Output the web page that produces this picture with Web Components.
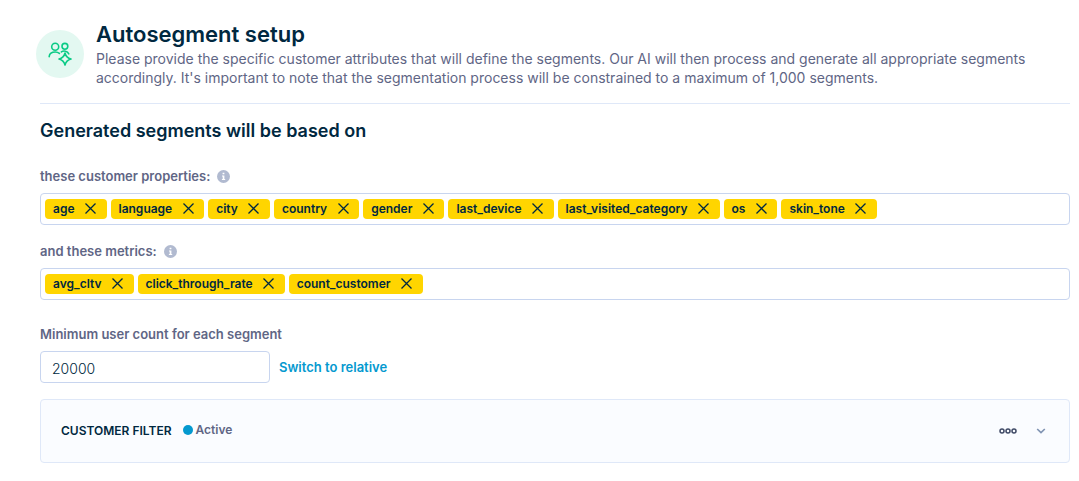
<!DOCTYPE html>
<html lang="en">
<head>
<meta charset="utf-8">
<title>Autosegment setup</title>
<style>
  body { margin: 0; background: #fff; color: #002840; font-family: Inter, "Liberation Sans", sans-serif; font-size: 13px; line-height: 20px; }
</style>
</head>
<body>
<autosegment-page></autosegment-page>

<script>
const define = (name, html, setup) => {
  const template = document.createElement('template');
  template.innerHTML = html;
  customElements.define(name, class extends HTMLElement {
    constructor() {
      super();
      this.attachShadow({ mode: 'open' }).append(template.content.cloneNode(true));
    }
    connectedCallback() { if (setup) setup(this, this.shadowRoot); }
  });
};

define('page-header', `
  <style>
    :host { display: flex; gap: 12px; align-items: flex-start; margin-left: -4px; padding-bottom: 16px; }
    .badge { flex: none; width: 48px; height: 48px; margin-top: 8px; border-radius: 50%; background: #e3f8f1; display: grid; place-items: center; }
    h1 { margin: 0; font-size: 22px; line-height: 24px; font-weight: 600; color: #002840; }
    p { margin: 3px 0 0; font-size: 14px; line-height: 19px; color: #5f6685; }
  </style>
  <span class="badge">
    <svg width="24" height="24" viewBox="0 0 24 24" fill="none" stroke="#0bcb86" stroke-width="1.6" stroke-linejoin="round" stroke-linecap="round" aria-hidden="true">
      <circle cx="7.2" cy="4.7" r="3.5"/>
      <circle cx="16.9" cy="4.3" r="2.9"/>
      <path d="M1.2 14.8v-.5C1.6 11.2 4.2 10 7.2 10c1.7 0 3.1.5 4.2 1.4"/>
      <path d="M13.4 9.9c2.2-1.7 6-.9 7.4 1.9"/>
      <path d="M17 11c.9 3.7 2.3 5.1 6 6-3.7.9-5.1 2.3-6 6-.9-3.7-2.3-5.1-6-6 3.7-.9 5.1-2.3 6-6z"/>
    </svg>
  </span>
  <div>
    <h1><slot name="title"></slot></h1>
    <p><slot></slot></p>
  </div>`);

define('info-tip', `
  <style>
    :host { display: block; width: 13px; height: 13px; }
    svg { display: block; }
  </style>
  <svg width="13" height="13" viewBox="0 0 13 13" role="img" aria-label="Information">
    <circle cx="6.5" cy="6.5" r="6.5" fill="#b1bad0"/>
    <path d="M5.6 2.7h1.8v1.6H5.6zM5 5.4h2.4v3.5h.8v1H4.9v-1h.8V6.4H5z" fill="#fff"/>
  </svg>`);

define('tag-chip', `
  <style>
    :host { display: flex; align-items: center; height: 20px; padding-left: 8px; border-radius: 4px; background: #ffd500; color: #002840; font-size: 12px; font-weight: 600; line-height: 20px; }
    button { width: 32px; height: 20px; padding: 0; border: 0; background: none; color: inherit; display: grid; place-items: center; cursor: pointer; }
    svg { display: block; margin-bottom: 2px; }
  </style>
  <slot></slot>
  <button type="button">
    <svg width="11" height="11" viewBox="0 0 11 11" fill="none" stroke="currentColor" stroke-width="1.3" aria-hidden="true"><path d="M.5.5l10 10M10.5.5l-10 10"/></svg>
  </button>`, (host, root) => {
  root.querySelector('button').setAttribute('aria-label', 'Remove ' + host.textContent);
  root.querySelector('button').onclick = () => host.remove();
});

define('tag-field', `
  <style>
    :host { display: block; }
    .label { display: flex; align-items: center; gap: 7px; height: 20px; color: #5f6685; font-weight: 600; }
    .box { display: flex; flex-wrap: wrap; gap: 4px; margin-top: 7px; padding: 5px 4px; border: 1px solid #c8d5ef; border-radius: 4px; }
  </style>
  <div class="label"><span id="label"><slot name="label"></slot></span><info-tip></info-tip></div>
  <div class="box" role="group" aria-labelledby="label"><slot></slot></div>`);

define('count-field', `
  <style>
    :host { display: block; }
    label { display: block; color: #5f6685; font-weight: 600; }
    .row { display: flex; align-items: center; gap: 9px; margin-top: 7px; }
    input { box-sizing: border-box; width: 230px; height: 32px; padding: 2px 11px 0; border: 1px solid #c8d5ef; border-radius: 4px; background: #fff; color: #002840; font: 300 14px Inter, "Liberation Sans", sans-serif; }
    a { color: #0499cf; font-weight: 600; text-decoration: none; }
  </style>
  <label for="count">Minimum user count for each segment</label>
  <div class="row">
    <input id="count" type="text" inputmode="numeric" value="20000">
    <a href="#relative">Switch to relative</a>
  </div>`);

define('filter-panel', `
  <style>
    :host { display: flex; align-items: center; box-sizing: border-box; height: 64px; padding: 0 20px; border: 1px solid #dfe8f8; border-radius: 4px; background: #fafcff; }
    h3 { margin: 0; font-size: 12px; line-height: 20px; font-weight: 600; color: #002840; }
    .status { display: flex; align-items: center; gap: 3px; margin: 0 auto 0 11px; padding-bottom: 2px; font-size: 12px; font-weight: 600; color: #5f6685; }
    .status::before { content: ""; width: 10px; height: 10px; border-radius: 50%; background: #0499cf; }
    button { padding: 0; border: 0; background: none; display: grid; place-items: center; height: 24px; cursor: pointer; }
    .more { width: 24px; margin-right: 13px; }
    .toggle { width: 16px; }
  </style>
  <h3><slot></slot></h3>
  <span class="status">Active</span>
  <button class="more" type="button" aria-label="More actions">
    <svg width="18" height="6" viewBox="0 0 18 6" fill="none" stroke="#3f4a66" stroke-width="1.5" aria-hidden="true"><circle cx="3" cy="3" r="2"/><circle cx="9" cy="3" r="2"/><circle cx="15" cy="3" r="2"/></svg>
  </button>
  <button class="toggle" type="button" aria-label="Expand" aria-expanded="false">
    <svg width="10" height="6" viewBox="0 0 10 6" fill="none" stroke="#8094b3" stroke-width="1.7" aria-hidden="true"><path d="M1.2 1L5 4.6 8.8 1"/></svg>
  </button>`);

define('autosegment-page', `
  <style>
    :host { display: block; padding: 22px 9px 18px 40px; }
    main { display: flex; flex-direction: column; }
    h2 { margin: 0; padding-top: 15px; border-top: 1px solid #dfe8f8; font-size: 18px; line-height: 24px; font-weight: 600; color: #002840; }
    .first { margin-top: 23px; }
    .second { margin-top: 16px; }
    count-field { margin-top: 24px; }
    filter-panel { margin-top: 16px; }
  </style>
  <main>
    <page-header>
      <span slot="title">Autosegment setup</span>
      Please provide the specific customer attributes that will define the segments. Our AI will then process and generate all appropriate segments accordingly. It's important to note that the segmentation process will be constrained to a maximum of 1,000 segments.
    </page-header>
    <h2>Generated segments will be based on</h2>
    <tag-field class="first">
      <span slot="label">these customer properties:</span>
      <tag-chip>age</tag-chip>
      <tag-chip>language</tag-chip>
      <tag-chip>city</tag-chip>
      <tag-chip>country</tag-chip>
      <tag-chip>gender</tag-chip>
      <tag-chip>last_device</tag-chip>
      <tag-chip>last_visited_category</tag-chip>
      <tag-chip>os</tag-chip>
      <tag-chip>skin_tone</tag-chip>
    </tag-field>
    <tag-field class="second">
      <span slot="label">and these metrics:</span>
      <tag-chip>avg_cltv</tag-chip>
      <tag-chip>click_through_rate</tag-chip>
      <tag-chip>count_customer</tag-chip>
    </tag-field>
    <count-field></count-field>
    <filter-panel>CUSTOMER FILTER</filter-panel>
  </main>`);
</script>
</body>
</html>
